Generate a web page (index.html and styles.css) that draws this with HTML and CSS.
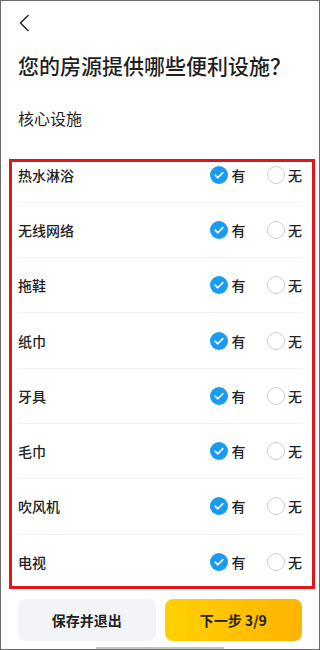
FILE: index.html
```html
<!DOCTYPE html>
<html lang="zh-CN">
<head>
<meta charset="utf-8">
<meta name="viewport" content="width=320">
<title>便利设施</title>
<link rel="stylesheet" href="styles.css">
</head>
<body>
<div class="screen">
  <div class="nav">
    <svg class="back" width="12" height="18" viewBox="0 0 12 18" aria-hidden="true">
      <polyline points="10,1.5 2.5,9 10,16.5" fill="none" stroke="#222" stroke-width="1.5" stroke-linecap="round" stroke-linejoin="round"/>
    </svg>
  </div>
  <h1 class="title">您的房源提供哪些便利设施？</h1>
  <h2 class="subtitle">核心设施</h2>

  <div class="list">
    <div class="row"><span class="label">热水淋浴</span><div class="opts"><span class="opt"><span class="radio on"><svg width="18" height="18" viewBox="0 0 18 18"><polyline points="5.2,9.2 7.9,11.8 12.8,6.6" fill="none" stroke="#fff" stroke-width="1.6" stroke-linecap="round" stroke-linejoin="round"/></svg></span>有</span><span class="opt"><span class="radio"></span>无</span></div></div>
    <div class="row"><span class="label">无线网络</span><div class="opts"><span class="opt"><span class="radio on"><svg width="18" height="18" viewBox="0 0 18 18"><polyline points="5.2,9.2 7.9,11.8 12.8,6.6" fill="none" stroke="#fff" stroke-width="1.6" stroke-linecap="round" stroke-linejoin="round"/></svg></span>有</span><span class="opt"><span class="radio"></span>无</span></div></div>
    <div class="row"><span class="label">拖鞋</span><div class="opts"><span class="opt"><span class="radio on"><svg width="18" height="18" viewBox="0 0 18 18"><polyline points="5.2,9.2 7.9,11.8 12.8,6.6" fill="none" stroke="#fff" stroke-width="1.6" stroke-linecap="round" stroke-linejoin="round"/></svg></span>有</span><span class="opt"><span class="radio"></span>无</span></div></div>
    <div class="row"><span class="label">纸巾</span><div class="opts"><span class="opt"><span class="radio on"><svg width="18" height="18" viewBox="0 0 18 18"><polyline points="5.2,9.2 7.9,11.8 12.8,6.6" fill="none" stroke="#fff" stroke-width="1.6" stroke-linecap="round" stroke-linejoin="round"/></svg></span>有</span><span class="opt"><span class="radio"></span>无</span></div></div>
    <div class="row"><span class="label">牙具</span><div class="opts"><span class="opt"><span class="radio on"><svg width="18" height="18" viewBox="0 0 18 18"><polyline points="5.2,9.2 7.9,11.8 12.8,6.6" fill="none" stroke="#fff" stroke-width="1.6" stroke-linecap="round" stroke-linejoin="round"/></svg></span>有</span><span class="opt"><span class="radio"></span>无</span></div></div>
    <div class="row"><span class="label">毛巾</span><div class="opts"><span class="opt"><span class="radio on"><svg width="18" height="18" viewBox="0 0 18 18"><polyline points="5.2,9.2 7.9,11.8 12.8,6.6" fill="none" stroke="#fff" stroke-width="1.6" stroke-linecap="round" stroke-linejoin="round"/></svg></span>有</span><span class="opt"><span class="radio"></span>无</span></div></div>
    <div class="row"><span class="label">吹风机</span><div class="opts"><span class="opt"><span class="radio on"><svg width="18" height="18" viewBox="0 0 18 18"><polyline points="5.2,9.2 7.9,11.8 12.8,6.6" fill="none" stroke="#fff" stroke-width="1.6" stroke-linecap="round" stroke-linejoin="round"/></svg></span>有</span><span class="opt"><span class="radio"></span>无</span></div></div>
    <div class="row last"><span class="label">电视</span><div class="opts"><span class="opt"><span class="radio on"><svg width="18" height="18" viewBox="0 0 18 18"><polyline points="5.2,9.2 7.9,11.8 12.8,6.6" fill="none" stroke="#fff" stroke-width="1.6" stroke-linecap="round" stroke-linejoin="round"/></svg></span>有</span><span class="opt"><span class="radio"></span>无</span></div></div>
  </div>

  <div class="footer">
    <button class="btn btn-save">保存并退出</button>
    <button class="btn btn-next">下一步 3/9</button>
  </div>

  <div class="highlight"></div>
  <div class="home-bar"></div>
</div>
</body>
</html>
```

FILE: styles.css
```css
* {
  box-sizing: border-box;
}

html, body {
  margin: 0;
  padding: 0;
  background: #fff;
}

body {
  font-family: "Noto Sans CJK SC", "Noto Sans", "Liberation Sans", sans-serif;
  color: #222;
}

.screen {
  position: relative;
  width: 320px;
  height: 650px;
  border: 1px solid #6b6b6b;
  display: flex;
  flex-direction: column;
  overflow: hidden;
  background: #fff;
}

.nav {
  height: 44px;
  display: flex;
  align-items: center;
  padding-left: 17px;
  flex-shrink: 0;
}

.back {
  display: block;
}

.title {
  margin: 6px 0 0 17px;
  font-size: 21px;
  line-height: 28px;
  font-weight: 500;
  color: #1f1f1f;
  white-space: nowrap;
}

.subtitle {
  margin: 28px 0 0 17px;
  font-size: 16px;
  line-height: 22px;
  font-weight: 400;
  color: #222;
}

.list {
  margin-top: 18.5px;
  flex-shrink: 0;
}

.row {
  height: 55.3px;
  margin: 0 17px;
  display: flex;
  align-items: center;
  justify-content: space-between;
  border-bottom: 1px solid #f2f2f2;
}

.row.last {
  border-bottom: none;
}

.label {
  font-size: 14px;
  font-weight: 500;
  line-height: 20px;
  color: #222;
}

.opts {
  display: flex;
  align-items: center;
  gap: 21px;
}

.opt {
  display: flex;
  align-items: center;
  gap: 3.5px;
  font-size: 14px;
  line-height: 20px;
  font-weight: 500;
  color: #222;
}

.radio {
  width: 18px;
  height: 18px;
  border-radius: 50%;
  border: 1px solid #cfcfcf;
  background: #fff;
  display: block;
  position: relative;
}

.radio.on {
  border: none;
  background: #1a9bf2;
}

.radio svg {
  display: block;
}

.footer {
  display: flex;
  gap: 9px;
  padding: 9px 17px 0;
  flex-shrink: 0;
}

.btn {
  flex: 1;
  height: 42px;
  border: none;
  border-radius: 8px;
  font-family: "Noto Sans CJK SC", "Noto Sans", sans-serif;
  font-size: 14px;
  font-weight: 600;
  color: #222;
  padding: 0;
}

.btn-save {
  background: #f3f4f8;
}

.btn-next {
  background: linear-gradient(90deg, #ffd100, #ffb400);
}

.highlight {
  position: absolute;
  left: 8px;
  top: 158px;
  width: 306px;
  height: 430px;
  border: 3px solid #e3151a;
  pointer-events: none;
}

.home-bar {
  position: absolute;
  left: 95px;
  bottom: 0;
  width: 128px;
  height: 2px;
  background: #c4c4c4;
}
```
